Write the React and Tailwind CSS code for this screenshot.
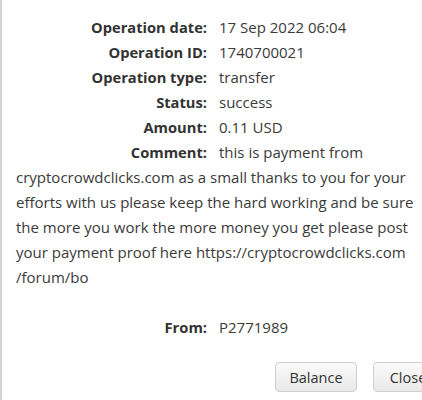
import React from "react";

const rows = [
  ["Operation date:", "17 Sep 2022 06:04"],
  ["Operation ID:", "1740700021"],
  ["Operation type:", "transfer"],
  ["Status:", "success"],
  ["Amount:", "0.11 USD"],
];

const comment =
  "this is payment from cryptocrowdclicks.com as a small thanks to you for your efforts with us please keep the hard working and be sure the more you work the more money you get please post your payment proof here https://cryptocrowdclicks.com /forum/bo";

const Row = ({ label, children }) => (
  <div className="pl-[14px] pr-1">
    <span className="inline-block w-[191px] text-right font-bold text-[14.7px] text-[#333]">{label}</span>
    <span className="ml-[12px]">{children}</span>
  </div>
);

const App = () => {
  return (
    <div
      className="w-[422px] h-[400px] bg-white border-l-2 border-[#d4d4d4] text-[15px] leading-[25px] text-[#3a3a3a] overflow-hidden"
      style={{ fontFamily: "'Open Sans', 'Liberation Sans', sans-serif" }}
    >
      <div className="pt-[15px]">
        {rows.map(([label, value]) => (
          <Row key={label} label={label}>
            {value}
          </Row>
        ))}
        <Row label="Comment:">{comment}</Row>
        <div className="h-[25px]" />
        <Row label="From:">P2771989</Row>
      </div>
      <div className="flex gap-4 pl-[273px] pt-[22px]">
        <button className="shrink-0 w-[82px] h-[30px] rounded-[4px] border border-[#cfcfcf] bg-gradient-to-b from-[#fafafa] to-[#e9e9e9] text-[14.5px] text-[#333]">
          Balance
        </button>
        <button className="shrink-0 w-[70px] h-[30px] rounded-[4px] border border-[#cfcfcf] bg-gradient-to-b from-[#fafafa] to-[#e9e9e9] text-[14.5px] text-[#333]">
          Close
        </button>
      </div>
    </div>
  );
};

export default App;
